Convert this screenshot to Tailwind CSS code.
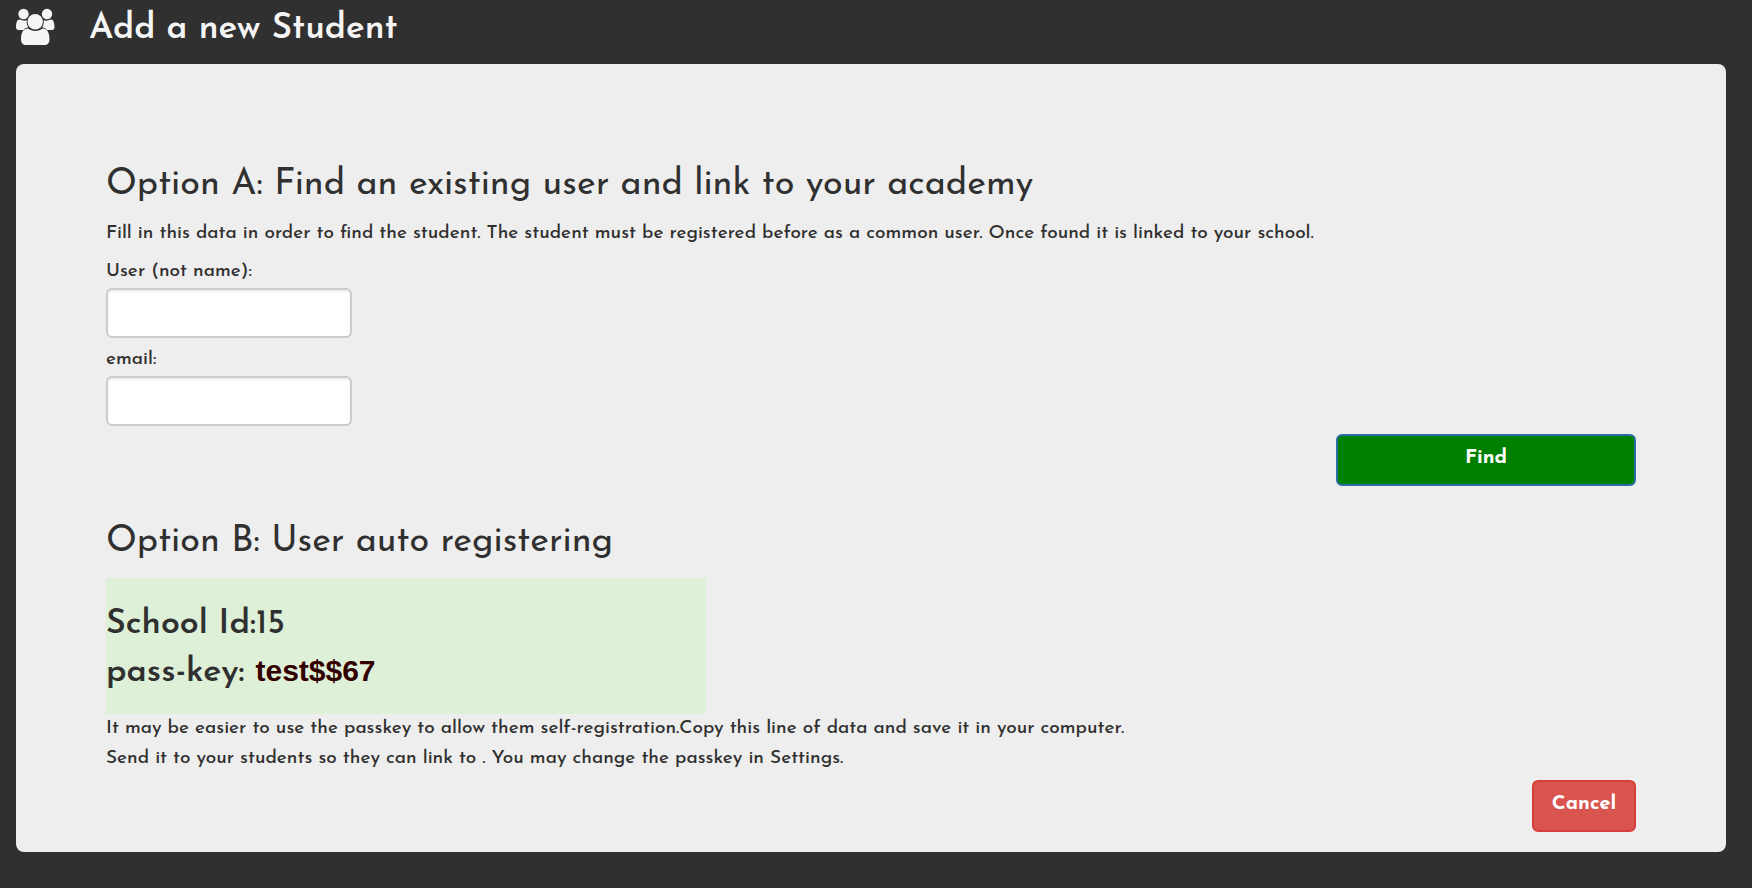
<!DOCTYPE html>
<html lang="en">
<head>
    <meta charset="UTF-8">
    <meta name="viewport" content="width=device-width, initial-scale=1.0">
    <title>Add a new Student</title>
    <script src="https://cdn.jsdelivr.net/npm/@tailwindcss/browser@4"></script>
</head>
<body class="min-h-screen bg-[#303030] pl-4 pr-[26px] pb-9 font-['Josefin_Sans',Lato,sans-serif] text-[19px] leading-[30px] font-medium text-[#303030]">
    <header class="flex h-16 items-start gap-[34px] pt-2 text-[#f5f5f5]">
        <svg class="h-[38px] w-[39px] shrink-0" viewBox="0 0 39 38" fill="currentColor" aria-hidden="true">
            <circle cx="7.5" cy="6" r="5.2"/>
            <circle cx="31" cy="6" r="5.2"/>
            <path d="M3.5 11.5C1 11.5 0 15 0 19.500C0 21.500 1.500 22 3.500 22H7.500C8.500 20.500 10 19.700 12.300 19.300C11 17.500 10.500 15 10.800 12.200C8.500 13.200 6 12.500 3.500 11.500Z"/>
            <path d="M35 11.500C37.500 11.500 38.500 15 38.500 19.500C38.500 21.500 37 22 35 22H31C30 20.500 28.500 19.700 26.200 19.300C27.500 17.500 28 15 27.700 12.200C30 13.200 32.500 12.500 35 11.500Z"/>
            <circle cx="19.200" cy="13.800" r="7.700"/>
            <path d="M12 20.500C14 22 16.500 23 19.200 23S24.500 22 26.500 20.500C31.500 20.500 33.500 25 33.500 31.500C33.500 35 31.500 37 28.500 37H10C7 37 5 35 5 31.500C5 25 7 20.500 12 20.500Z"/>
        </svg>
        <h1 class="pt-1 text-[35px] leading-[36px] font-semibold">Add a new Student</h1>
    </header>

    <main class="rounded-lg bg-[#eee] px-[90px] pt-[99px] pb-5">
        <form>
            <h2 class="mb-3 text-[36px] leading-[44px] font-normal">Option A: Find an existing user and link to your academy</h2>
            <p class="mb-2">Fill in this data in order to find the student. The student must be registered before as a common user. Once found it is linked to your school.</p>
            <label for="user" class="block pb-px">User (not name):</label>
            <input id="user" type="text" class="block h-[50px] w-[246px] rounded-md border-2 border-[#ccc] bg-white px-3 shadow-[inset_0_2px_2px_rgba(0,0,0,0.075)]">
            <label for="email" class="block pt-[7px] pb-px">email:</label>
            <input id="email" type="email" class="block h-[50px] w-[246px] rounded-md border-2 border-[#ccc] bg-white px-3 shadow-[inset_0_2px_2px_rgba(0,0,0,0.075)]">
            <div class="flex justify-end pt-2">
                <button type="button" class="h-[52px] w-[300px] rounded-md border-2 border-[#2e6da4] bg-[#008000] pb-1 text-[20px] font-bold text-white">Find</button>
            </div>
        </form>

        <section>
            <h2 class="mt-[34px] mb-[14px] text-[36px] leading-[44px] font-normal">Option B: User auto registering</h2>
            <div class="h-[136px] w-[600px] max-w-full bg-[#dff0d8] pt-6 text-[34px] leading-[46px]">
                <p><strong class="font-semibold">School Id:</strong>15</p>
                <p><strong class="font-semibold">pass-key:</strong> <span class="font-['Liberation_Sans',sans-serif] text-[30px] font-bold text-[#300]">test$$67</span></p>
            </div>
            <p>It may be easier to use the passkey to allow them self-registration.Copy this line of data and save it in your computer.<br>Send it to your students so they can link to . You may change the passkey in Settings.</p>
            <div class="flex justify-end pt-[6px]">
                <button type="button" class="h-[52px] w-[104px] rounded-md border-2 border-[#d43f3a] bg-[#d9534f] pb-1 text-[20px] font-bold text-white">Cancel</button>
            </div>
        </section>
    </main>
</body>
</html>
